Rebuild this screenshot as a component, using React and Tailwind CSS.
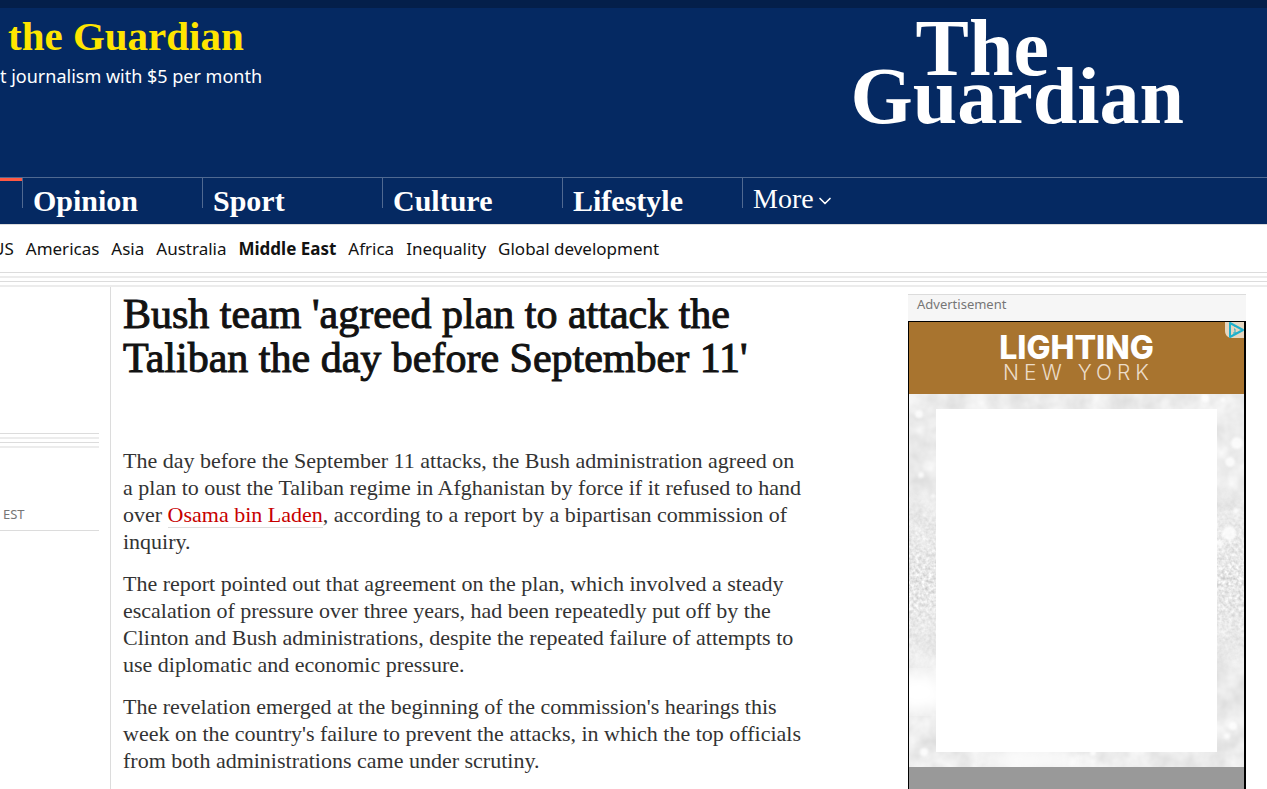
import { ChevronDown } from 'lucide-react';

const SERIF = "font-['Liberation_Serif',serif]";
const SANS = "font-['Noto_Sans',sans-serif]";

const pillars = ['Opinion', 'Sport', 'Culture', 'Lifestyle'];

const regions = [
  { name: 'US' },
  { name: 'Americas' },
  { name: 'Asia' },
  { name: 'Australia' },
  { name: 'Middle East', current: true },
  { name: 'Africa' },
  { name: 'Inequality' },
  { name: 'Global development' },
];

const MultiLine = () => (
  <div className="flex flex-col gap-[3px]">
    <div className="h-px bg-[#dcdcdc]" />
    <div className="h-[2px] bg-[#ececec]" />
    <div className="h-px bg-[#dcdcdc]" />
    <div className="h-[2px] bg-[#ececec]" />
  </div>
);

const Header = () => (
  <header className="bg-[#052962] border-t-8 border-[#041f4a] text-white">
    <div className="flex justify-between h-[169px] pr-[83px]">
      <div className="pt-1 whitespace-nowrap">
        <p className={`${SERIF} pl-2 text-[41px] leading-[48px] font-bold text-[#ffe500]`}>
          the Guardian
        </p>
        <p className={`${SANS} text-[18px] leading-6 pt-1`}>t journalism with $5 per month</p>
      </div>
      <a
        href="#home"
        aria-label="The Guardian"
        className={`${SERIF} pt-4 text-[80px] leading-[48px] font-bold`}
      >
        <span className="block pl-[65px]">The</span>
        <span className="block">Guardian</span>
      </a>
    </div>

    {/* Pillars */}
    <nav className="border-t border-[#506991] h-[47px] flex">
      <div className="w-[22px] h-[3px] bg-[#ff5943]" />
      {pillars.map((pillar) => (
        <div key={pillar} className="w-[180px] h-[30px] border-l border-[#506991] pl-[10px]">
          <a href="#pillar" className={`${SERIF} block text-[30px] leading-[46px] font-bold`}>
            {pillar}
          </a>
        </div>
      ))}
      <div className="h-[30px] border-l border-[#506991] pl-[10px]">
        <button type="button" className={`${SERIF} flex items-center text-[28px] leading-[42px]`}>
          More
          <ChevronDown className="w-5 h-5 mt-1 ml-px" strokeWidth={2} />
        </button>
      </div>
    </nav>
  </header>
);

const RegionNav = () => (
  <nav className="border-t border-[#dcdcdc] overflow-hidden">
    <ul className={`${SANS} flex gap-3 -ml-2 text-[17px] leading-[47px] whitespace-nowrap`}>
      {regions.map(({ name, current }) => (
        <li key={name}>
          <a href="#region" className={current ? 'font-bold' : ''}>
            {name}
          </a>
        </li>
      ))}
    </ul>
  </nav>
);

const Meta = () => (
  <div className="w-[110px] shrink-0 pt-[146px] pr-[11px]">
    <MultiLine />
    <p className={`${SANS} pt-[56px] pb-[6px] pl-[3px] text-[13px] leading-5 text-[#767676] border-b border-[#dcdcdc]`}>
      EST
    </p>
  </div>
);

const Article = () => (
  <article className={`${SERIF} flex-1 min-w-0 border-l border-[#dcdcdc] pl-3 pt-[5px] pb-4`}>
    <h1 className="text-[42px] leading-[44px] [-webkit-text-stroke:1px_#121212]">
      Bush team 'agreed plan to attack the
      <br />
      Taliban the day before September 11'
    </h1>
    <div className="mt-[67px] space-y-[15px] max-w-[700px] whitespace-nowrap text-[22px] leading-[27px] text-[#333333]">
      <p>
        The day before the September 11 attacks, the Bush administration agreed on
        <br />
        a plan to oust the Taliban regime in Afghanistan by force if it refused to hand
        <br />
        over <a href="#osama" className="text-[#c70000] border-b border-[#dcdcdc]">Osama bin Laden</a>, according to a report by a bipartisan commission of
        <br />
        inquiry.
      </p>
      <p>
        The report pointed out that agreement on the plan, which involved a steady
        <br />
        escalation of pressure over three years, had been repeatedly put off by the
        <br />
        Clinton and Bush administrations, despite the repeated failure of attempts to
        <br />
        use diplomatic and economic pressure.
      </p>
      <p>
        The revelation emerged at the beginning of the commission's hearings this
        <br />
        week on the country's failure to prevent the attacks, in which the top officials
        <br />
        from both administrations came under scrutiny.
      </p>
    </div>
  </article>
);

const glints = [
  [12, 81, 3], [24, 102, 2], [15, 121, 2], [10, 20, 4], [321, 68, 5], [327, 117, 3],
  [320, 139, 7], [311, 150, 3], [328, 49, 6], [15, 358, 4], [318, 342, 3], [324, 332, 4], [184, 359, 3],
  [296, 4, 4], [314, 6, 2],
];

const Sparkle = () => (
  <svg className="absolute inset-0 w-full h-full" aria-hidden="true">
    <filter id="haze" colorInterpolationFilters="sRGB">
      <feTurbulence type="fractalNoise" baseFrequency="0.05" numOctaves="3" seed="4" />
      <feColorMatrix values="0.15 0 0 0 0.85  0.15 0 0 0 0.85  0.15 0 0 0 0.85  0 0 0 0 1" />
    </filter>
    <filter id="grain" colorInterpolationFilters="sRGB">
      <feTurbulence type="fractalNoise" baseFrequency="0.3" numOctaves="2" seed="7" />
      <feColorMatrix values="0.35 0 0 0 0.73  0.35 0 0 0 0.73  0.35 0 0 0 0.73  0 0 0 0 1" />
    </filter>
    <linearGradient id="band" x1="0" y1="0" x2="0" y2="1">
      <stop offset="0.25" stopColor="#000" />
      <stop offset="0.5" stopColor="#fff" />
      <stop offset="0.75" stopColor="#000" />
    </linearGradient>
    <mask id="grain-mask">
      <rect width="100%" height="100%" fill="url(#band)" />
    </mask>
    <filter id="soft">
      <feGaussianBlur stdDeviation="1" />
    </filter>
    <filter id="glow">
      <feGaussianBlur stdDeviation="7" />
    </filter>
    <rect width="100%" height="100%" filter="url(#haze)" />
    <g mask="url(#grain-mask)">
      <rect width="100%" height="100%" filter="url(#grain)" />
    </g>
    <ellipse cx="10" cy="298" rx="26" ry="20" fill="#fff" filter="url(#glow)" />
    <ellipse cx="120" cy="366" rx="45" ry="12" fill="#fafafa" filter="url(#glow)" />
    <g fill="#fff" opacity="0.8" filter="url(#soft)">
      {glints.map(([x, y, r]) => (
        <circle key={`${x}-${y}`} cx={x} cy={y} r={r} />
      ))}
    </g>
  </svg>
);

const Advert = () => (
  <aside className="w-[338px] shrink-0 mr-[21px] mt-[7px] flex flex-col">
    <p className={`${SANS} border-t border-[#dcdcdc] bg-[#f6f6f6] pl-[9px] pb-2 text-[13px] leading-[18px] text-[#767676]`}>
      Advertisement
    </p>
    <div className="flex-1 flex flex-col border-l border-t border-r-2 border-black bg-[#999999]">
      <div className="relative h-[72px] bg-[#a8742f] text-white flex flex-col items-center pt-3">
        <p className="font-['Inter',sans-serif] text-[32px] leading-7 font-extrabold">LIGHTING</p>
        <p className="font-['Inter',sans-serif] pl-1 text-[21px] leading-[22px] font-light tracking-[5px] text-[#ecdcc8]">NEW YORK</p>
        <a href="#adchoices" aria-label="AdChoices" className="absolute top-0 right-0">
          <svg width="19" height="16" viewBox="0 0 19 16">
            <path d="M0 0h19v16H5Q0 14 0 9z" fill="#e6d6c0" />
            <path d="M5 1v14l13-7z" fill="none" stroke="#1fb0cc" strokeWidth="2" strokeLinejoin="round" />
            <path d="M9 7h1v4M8 11h4M10 4v1" fill="none" stroke="#1fb0cc" strokeWidth="1" />
          </svg>
        </a>
      </div>
      <div className="relative px-[27px] py-[15px]">
        <Sparkle />
        <div className="relative h-[343px] bg-white" />
      </div>
    </div>
  </aside>
);

export default function App() {
  return (
    <div className="min-h-screen flex flex-col bg-white text-[#121212] overflow-hidden">
      <Header />
      <RegionNav />
      <MultiLine />
      <main className="flex-1 flex">
        <Meta />
        <Article />
        <Advert />
      </main>
    </div>
  );
}
